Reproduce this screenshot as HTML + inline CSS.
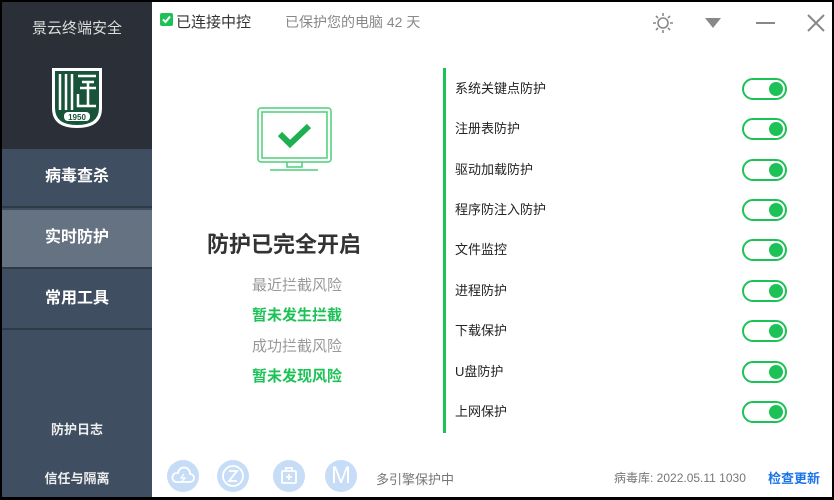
<!DOCTYPE html>
<html><head><meta charset="utf-8"><style>
*{margin:0;padding:0;box-sizing:border-box}
body{width:834px;height:500px;background:#000;position:relative;overflow:hidden;font-family:"Liberation Sans","Noto Sans CJK SC",sans-serif}
.win{position:absolute;left:2px;top:2px;width:830px;height:495px;background:#fff}
.side{position:absolute;left:0;top:0;width:150px;height:495px;background:#3f4e60}
.top{position:absolute;left:0;top:0;width:150px;height:147px;background:#2b2f37}
.title{position:absolute;left:0;top:15px;width:150px;text-align:center;color:#ddd;font-size:15px}
.menu{position:absolute;left:0;width:150px;height:59px;line-height:56px;text-align:center;color:#fff;font-size:16px;font-weight:bold;border-bottom:2px solid #2f3a47}
.small{position:absolute;left:0;width:150px;text-align:center;color:#eee;font-size:13px;font-weight:bold}
.t{position:absolute;font-size:15px}
.row{position:absolute;left:453px;font-size:13px;color:#222}
.tg{position:absolute;left:740px;width:45px;height:22px;border:2px solid #1dc256;border-radius:11px}
.tg::after{content:"";position:absolute;right:2px;top:2px;width:14px;height:14px;border-radius:50%;background:#1dc256}
.ic{position:absolute;top:458px;width:32px;height:32px;border-radius:50%;background:#c6dcf7}
.ic svg{position:absolute;left:0;top:0}
</style></head><body><div class="win">
<div class="side">
<div class="top"><div class="title">景云终端安全</div>
<svg style="position:absolute;left:48px;top:64px" width="54" height="64" viewBox="0 0 54 64"><path d="M2 2H52V42Q52 62 27 62Q2 62 2 42Z" fill="#fff"/><path d="M5 5H49V42Q49 59 27 59Q5 59 5 42Z" fill="#17543a"/><g stroke="#fff" stroke-width="2.5" fill="none"><path d="M10 8V44M16 8V44M22 8V44M28 10H46M32 16H44M38 16V40M30 22H46M28 28V40H46"/></g><rect x="14" y="46" width="26" height="9" rx="4" fill="#fff"/><text x="27" y="54" font-size="8" text-anchor="middle" fill="#17543a" font-weight="bold">1950</text></svg>
</div>
<div class="menu" style="top:147px">病毒查杀</div>
<div class="menu" style="top:208px;background:#657282">实时防护</div>
<div class="menu" style="top:269px">常用工具</div>
<div class="small" style="top:417px">防护日志</div>
<div class="small" style="top:466px">信任与隔离</div>
</div>
<div style="position:absolute;left:158px;top:11px;width:13px;height:13px;background:#1dc256;border-radius:2px"></div>
<svg style="position:absolute;left:158px;top:11px" width="13" height="13"><path d="M3 6.5L5.5 9L10 3.5" stroke="#fff" stroke-width="2" fill="none"/></svg>
<div class="t" style="left:174px;top:9px;color:#333">已连接中控</div>
<div class="t" style="left:283px;top:10px;color:#888;font-size:14px">已保护您的电脑 42 天</div>
<svg style="position:absolute;left:650px;top:10px" width="22" height="22" viewBox="0 0 22 22" stroke="#888" stroke-width="1.6" fill="none"><circle cx="11" cy="11" r="5"/><path d="M11 1V4M11 18V21M1 11H4M18 11H21M4 4L6 6M16 16L18 18M4 18L6 16M16 6L18 4"/></svg>
<svg style="position:absolute;left:703px;top:16px" width="16" height="10"><path d="M0 0H16L8 10Z" fill="#888"/></svg>
<div style="position:absolute;left:754px;top:20px;width:19px;height:2px;background:#888"></div>
<svg style="position:absolute;left:805px;top:12px" width="18" height="18" stroke="#888" stroke-width="2"><path d="M1 1L17 17M17 1L1 17"/></svg>
<svg style="position:absolute;left:253px;top:104px" width="78" height="66" viewBox="0 0 78 66" fill="none" stroke="#4ccf78" stroke-width="1.5"><rect x="3" y="2" width="73" height="54" rx="3"/><rect x="7" y="6" width="65" height="46"/><path d="M32 56V61H47V56M15 64H63" /><path d="M25 28L35 38L54 20" stroke="#1db04e" stroke-width="6"/></svg>
<div style="position:absolute;left:205px;top:225px;font-size:22px;font-weight:bold;color:#333">防护已完全开启</div>
<div class="t" style="left:250px;top:272px;color:#999">最近拦截风险</div>
<div class="t" style="left:250px;top:302px;color:#1dc256;font-weight:bold">暂未发生拦截</div>
<div class="t" style="left:250px;top:333px;color:#999">成功拦截风险</div>
<div class="t" style="left:250px;top:363px;color:#1dc256;font-weight:bold">暂未发现风险</div>
<div style="position:absolute;left:441px;top:66px;width:3px;height:365px;background:#1dc256"></div>
<div class="row" style="top:76px">系统关键点防护</div><div class="tg" style="top:76px"></div>
<div class="row" style="top:116px">注册表防护</div><div class="tg" style="top:116px"></div>
<div class="row" style="top:157px">驱动加载防护</div><div class="tg" style="top:157px"></div>
<div class="row" style="top:197px">程序防注入防护</div><div class="tg" style="top:197px"></div>
<div class="row" style="top:237px">文件监控</div><div class="tg" style="top:237px"></div>
<div class="row" style="top:278px">进程防护</div><div class="tg" style="top:278px"></div>
<div class="row" style="top:318px">下载保护</div><div class="tg" style="top:318px"></div>
<div class="row" style="top:359px">U盘防护</div><div class="tg" style="top:359px"></div>
<div class="row" style="top:399px">上网保护</div><div class="tg" style="top:399px"></div>
<div class="ic" style="left:165px"><svg width="32" height="32" fill="none" stroke="#fff" stroke-width="1.8"><path d="M9 22H23A4 4 0 0 0 23 14A6 6 0 0 0 11 13A4.5 4.5 0 0 0 9 22Z"/><path d="M17 14L14 18H18L15 21" stroke-width="1.3"/></svg></div>
<div class="ic" style="left:215px"><svg width="32" height="32" fill="none" stroke="#fff" stroke-width="1.8"><circle cx="16" cy="16" r="10"/><path d="M12 11H20L12 21H20"/></svg></div>
<div class="ic" style="left:271px"><svg width="32" height="32" fill="none" stroke="#fff" stroke-width="1.8"><rect x="9" y="11" width="14" height="12" rx="1"/><path d="M13 11V8H19V11M16 14V20M13 17H19"/></svg></div>
<div class="ic" style="left:323px;color:#fff;font-size:24px;text-align:center;line-height:32px">M</div>
<div style="position:absolute;left:374px;top:467px;font-size:13px;color:#777">多引擎保护中</div>
<div style="position:absolute;left:612px;top:467px;font-size:12px;color:#777">病毒库: 2022.05.11 1030</div>
<div style="position:absolute;left:766px;top:466px;font-size:13px;color:#1a73e8;font-weight:bold">检查更新</div>
</div></body></html>
